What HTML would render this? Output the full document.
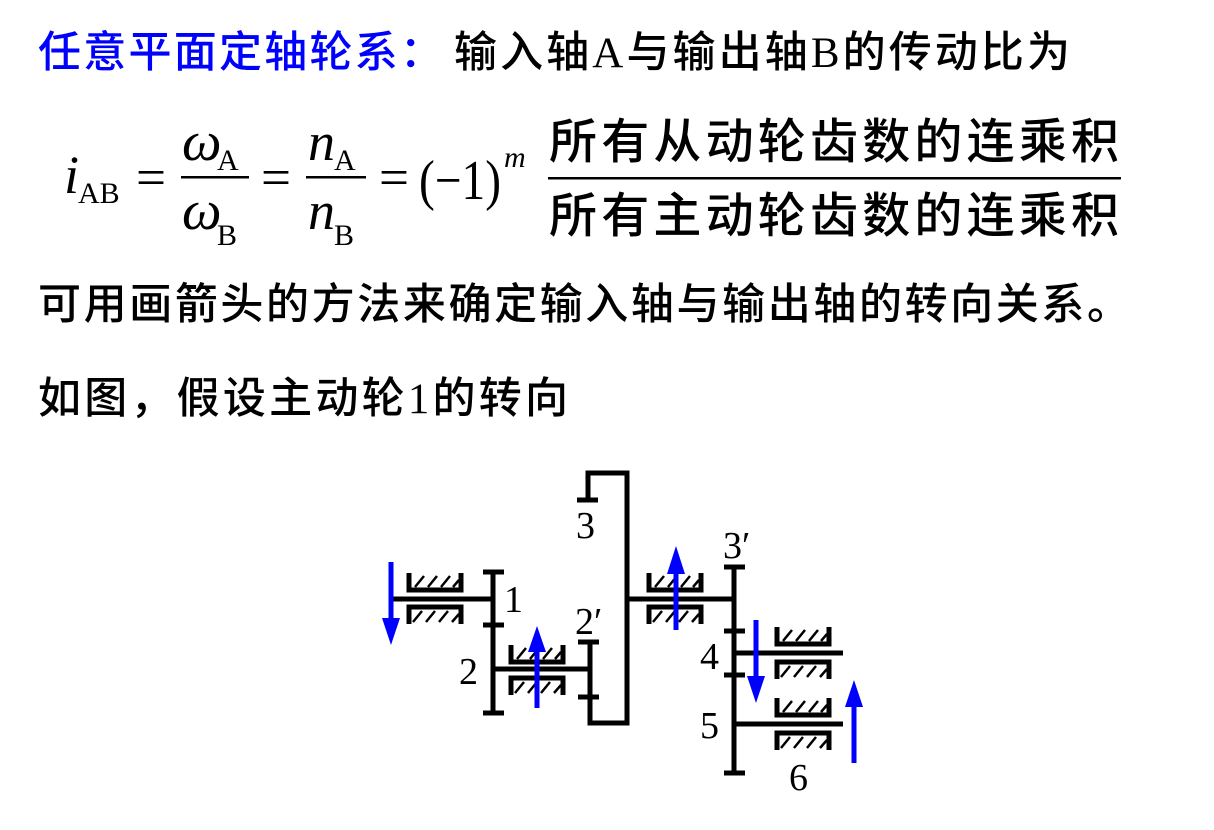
<!DOCTYPE html>
<html><head><meta charset="utf-8"><style>
html,body{margin:0;padding:0;background:#fff;}
body{width:1214px;height:830px;overflow:hidden;position:relative;}
</style></head><body>
<svg width="1214" height="830" viewBox="0 0 1214 830" xmlns="http://www.w3.org/2000/svg" style="position:absolute;left:0;top:0">
<g font-family="Liberation Serif, Noto Sans CJK SC, sans-serif" font-size="43" font-weight="500">
<text x="38" y="67" fill="#0000ff" textLength="405" lengthAdjust="spacing">任意平面定轴轮系：</text>
<text x="454" y="67" fill="#000" textLength="616" lengthAdjust="spacing">输入轴A与输出轴B的传动比为</text>
<text x="38" y="319" fill="#000" textLength="1092" lengthAdjust="spacing">可用画箭头的方法来确定输入轴与输出轴的转向关系。</text>
<text x="38" y="413" fill="#000" textLength="530" lengthAdjust="spacing">如图，假设主动轮1的转向</text>
</g>
<g font-family="Liberation Serif, serif" fill="#000">
<text x="64" y="193" font-size="54" font-style="italic">i</text>
<text x="78" y="203" font-size="30">AB</text>
<text x="136" y="195" font-size="52" textLength="30" lengthAdjust="spacingAndGlyphs">=</text>
<text x="182" y="160" font-size="56" font-style="italic">ω</text>
<text x="217" y="170" font-size="30">A</text>
<rect x="181" y="176" width="68" height="2.5"/>
<text x="182" y="229" font-size="56" font-style="italic">ω</text>
<text x="217" y="245" font-size="30">B</text>
<text x="261" y="195" font-size="52" textLength="30" lengthAdjust="spacingAndGlyphs">=</text>
<text x="308" y="160" font-size="54" font-style="italic">n</text>
<text x="334" y="170" font-size="30">A</text>
<rect x="306" y="176" width="60" height="2.5"/>
<text x="308" y="229" font-size="54" font-style="italic">n</text>
<text x="334" y="245" font-size="30">B</text>
<text x="379" y="195" font-size="52" textLength="30" lengthAdjust="spacingAndGlyphs">=</text>
<text x="419" y="199" font-size="56" textLength="82" lengthAdjust="spacingAndGlyphs">(−1)</text>
<text x="504" y="167" font-size="30" font-style="italic">m</text>
</g>
<g font-family="Liberation Serif, Noto Sans CJK SC, sans-serif" font-size="48" font-weight="500" fill="#000">
<text x="549" y="158" textLength="570" lengthAdjust="spacing">所有从动轮齿数的连乘积</text>
<rect x="548" y="177" width="573" height="2.5"/>
<text x="549" y="232" textLength="570" lengthAdjust="spacing">所有主动轮齿数的连乘积</text>
</g>
<g stroke="#000" stroke-width="5" fill="none" stroke-linecap="butt">
<polyline points="588,500 588,473 627,473 627,723 590,723 590,642"/>
<line x1="577" y1="500" x2="598" y2="500"/>
<line x1="578" y1="642" x2="599" y2="642"/>
<line x1="578" y1="697" x2="599" y2="697"/>
<line x1="627" y1="599" x2="735" y2="599"/>
<line x1="493" y1="572" x2="493" y2="713"/>
<line x1="483" y1="572" x2="504" y2="572"/>
<line x1="483" y1="625" x2="504" y2="625"/>
<line x1="483" y1="713" x2="504" y2="713"/>
<line x1="392" y1="599" x2="493" y2="599"/>
<line x1="493" y1="669" x2="590" y2="669"/>
<line x1="734" y1="567" x2="734" y2="773"/>
<line x1="724" y1="567" x2="745" y2="567"/>
<line x1="724" y1="631" x2="745" y2="631"/>
<line x1="724" y1="675" x2="745" y2="675"/>
<line x1="724" y1="773" x2="745" y2="773"/>
<line x1="734" y1="653" x2="843" y2="653"/>
<line x1="734" y1="724" x2="843" y2="724"/>
</g>
<defs>
<g id="bu">
<polyline points="2,0 2,17 54,17 54,0" stroke="#000" stroke-width="5" fill="none"/>
<path d="M8,14 L17,3 M21,14 L30,3 M34,14 L43,3 M46,14 L52,7" stroke="#000" stroke-width="2.5" fill="none"/>
</g>
<g id="bl">
<polyline points="2,19 2,2 54,2 54,19" stroke="#000" stroke-width="5" fill="none"/>
<path d="M6,17 L15,6 M19,17 L28,6 M32,17 L41,6 M45,17 L52,9" stroke="#000" stroke-width="2.5" fill="none"/>
</g>
</defs>
<use href="#bu" x="407" y="573"/>
<use href="#bl" x="407" y="605"/>
<use href="#bu" x="509" y="645"/>
<use href="#bl" x="509" y="676"/>
<use href="#bu" x="647" y="573"/>
<use href="#bl" x="647" y="605"/>
<use href="#bu" x="775" y="627"/>
<use href="#bl" x="775" y="660"/>
<use href="#bu" x="775" y="698"/>
<use href="#bl" x="775" y="731"/>
<g fill="#0000ff" stroke="#0000ff" stroke-width="5">
<line x1="391" y1="562" x2="391" y2="620"/>
<polygon points="382,618 400,618 391,645" stroke="none"/>
<line x1="537" y1="708" x2="537" y2="650"/>
<polygon points="528,652 546,652 537,626" stroke="none"/>
<line x1="676" y1="630" x2="676" y2="572"/>
<polygon points="667,574 685,574 676,546" stroke="none"/>
<line x1="756" y1="620" x2="756" y2="678"/>
<polygon points="747,676 765,676 756,703" stroke="none"/>
<line x1="854" y1="763" x2="854" y2="705"/>
<polygon points="845,707 863,707 854,680" stroke="none"/>
</g>
<g font-family="Liberation Serif, serif" font-size="38" fill="#000">
<text x="576" y="538">3</text>
<text x="504" y="612">1</text>
<text x="459" y="684">2</text>
<text x="575" y="634">2′</text>
<text x="723" y="558">3′</text>
<text x="700" y="669">4</text>
<text x="700" y="738">5</text>
<text x="789" y="790">6</text>
</g>
</svg>
</body></html>
